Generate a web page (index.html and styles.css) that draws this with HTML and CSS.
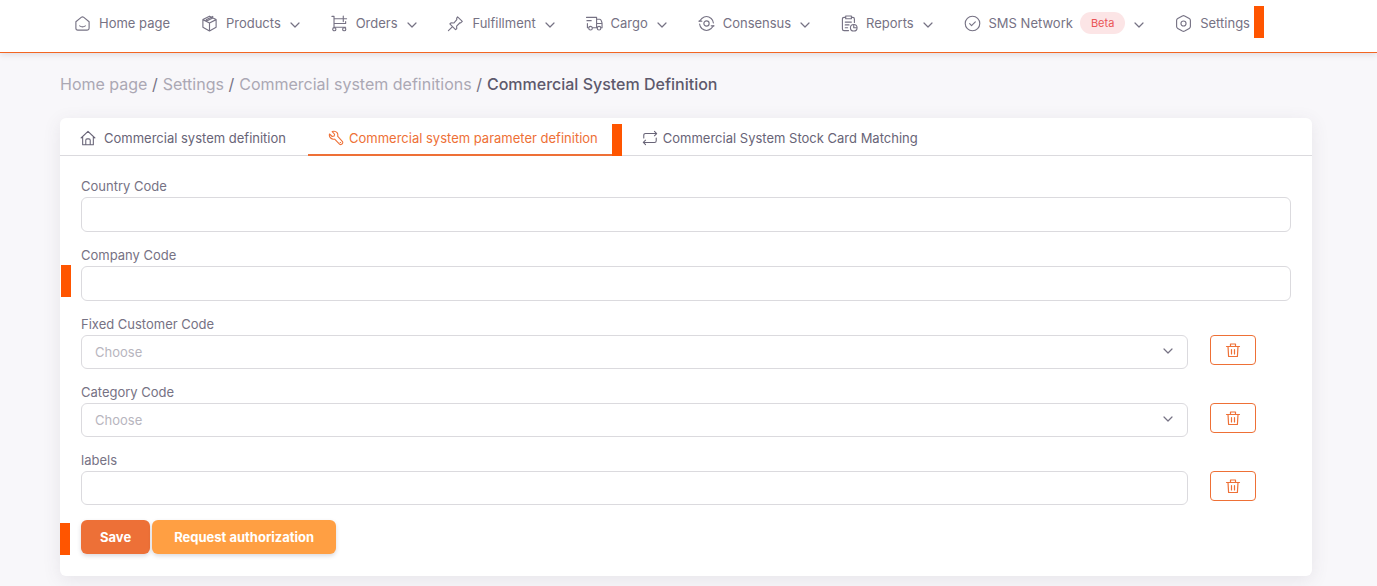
FILE: index.html
```html
<!DOCTYPE html>
<html lang="en">
<head>
<meta charset="utf-8">
<title>Commercial System Definition</title>
<link rel="stylesheet" href="styles.css">
</head>
<body>
<svg class="sprite" aria-hidden="true">
  <symbol id="chevron" viewBox="0 0 10 10"><path d="M1 3l4 4 4-4"/></symbol>
  <symbol id="trash" viewBox="0 0 16 16"><path d="M1.500 4.500h13M5.500 4.500v-2.500h5v2.500M3 4.500l.6 10h8.800l.6-10M6.500 7.500v4.500M9.500 7.500v4.500"/></symbol>
</svg>
<header class="topbar">
  <nav class="nav">
    <a class="nav-item" href="#"><svg class="icon" viewBox="0 0 18 18"><path d="M2 7.200 7.600 2.500q1.400-1 2.800 0L16 7.200V14q0 2-2 2H4q-2 0-2-2zM6 11.500q3 2 6 0"/></svg>Home page</a>
    <a class="nav-item" href="#"><svg class="icon" viewBox="0 0 18 18"><path d="M9 1.200l7 3.600v8.200L9 16.900 2 13V4.800zM2 4.900l7 3.600 7-3.600M9 8.500v8.200M5.500 6.700V5l7-3.500M5.500 6.700l7-3.500"/></svg>Products<svg class="chevron"><use href="#chevron"/></svg></a>
    <a class="nav-item" href="#"><svg class="icon" viewBox="0 0 18 18"><path d="M1 1.500h2.200v12M3.200 4h6.300M3.200 9h12.300V7M3.200 13h12.300M13 1v6M10 4h6.500"/><circle cx="3.500" cy="15" r="1.700"/><circle cx="14" cy="15" r="1.700"/></svg>Orders<svg class="chevron"><use href="#chevron"/></svg></a>
    <a class="nav-item" href="#"><svg class="icon" viewBox="0 0 18 18"><path d="M11.200 2l5 4.800-1.700 1.600-.8-.2-3.500 3.500.1 2.800-1.300 1L3 9.500l1.200-1.100 3 .1 3.200-3.600-.2-1.300zM5.900 12.300 1.500 16.500"/></svg>Fulfillment<svg class="chevron"><use href="#chevron"/></svg></a>
    <a class="nav-item" href="#"><svg class="icon" viewBox="0 0 18 18"><path d="M.5 2.500h10.700v11H7M1 6h4.500M1.500 9v4.500h1M11.200 4.500h3.300q1.500 0 2.500 4v5h-1M11.200 9H17M11.200 13.500h.5"/><circle cx="4.800" cy="14" r="1.900"/><circle cx="13.800" cy="14" r="1.900"/></svg>Cargo<svg class="chevron"><use href="#chevron"/></svg></a>
    <a class="nav-item" href="#"><svg class="icon" viewBox="0 0 18 18"><path d="M4 3.700q5-4.200 10 0 2 1.900 2.300 4.800M1.700 9.500Q2 12.300 4 14.300q5 4.200 10 0M1.700 6.500 4 3.700M14 14.300l2.300-2.800"/><circle cx="9" cy="9" r="2.800"/><path d="M1 6.500h3M14 11.500h3"/></svg>Consensus<svg class="chevron"><use href="#chevron"/></svg></a>
    <a class="nav-item" href="#"><svg class="icon" viewBox="0 0 18 18"><path d="M5 2.500H3.200Q1.500 2.500 1.500 4.200v10.600q0 1.700 1.700 1.700H8M11 2.500h1.500q1.700 0 1.700 1.700V8M5 1h6v3H5zM4.500 7.500H11M4.500 10.500h4M4.500 13.500H7"/><circle cx="13.500" cy="13.500" r="3.500"/><path d="M13.500 10.500v3h3"/></svg>Reports<svg class="chevron"><use href="#chevron"/></svg></a>
    <a class="nav-item" href="#"><svg class="icon" viewBox="0 0 18 18"><circle cx="9" cy="9" r="7.700"/><path d="M6 9.200l2 2 4-4"/></svg>SMS Network<span class="badge">Beta</span><svg class="chevron"><use href="#chevron"/></svg></a>
    <a class="nav-item" href="#"><svg class="icon" viewBox="0 0 18 18"><path d="M7.800 1q1.200-.6 2.400 0l4.900 2.800q1.200.7 1.200 2v6.400q0 1.300-1.200 2L10.200 17q-1.200.6-2.400 0l-4.900-2.800q-1.200-.7-1.200-2V5.800q0-1.300 1.200-2z"/><circle cx="9" cy="9" r="2.700"/></svg>Settings<i class="marker marker-nav"></i></a>
  </nav>
</header>
<main class="page">
  <nav class="crumbs" aria-label="Breadcrumb">
    <span><a href="#">Home page</a> /</span>
    <span><a href="#">Settings</a> /</span>
    <span><a href="#">Commercial system definitions</a> /</span>
    <span class="current">Commercial System Definition</span>
  </nav>
  <section class="card">
    <div class="tabs" role="tablist">
      <button class="tab tab-home" role="tab" type="button"><svg class="icon" viewBox="0 0 18 18"><path d="M1.200 9 9 1.500 16.800 9M3 7.500v9h12v-9M6.500 16.500v-5q0-1.500 1.500-1.500h2q1.500 0 1.500 1.500v5"/></svg>Commercial system definition</button>
      <button class="tab active" role="tab" type="button" aria-selected="true"><svg class="icon" viewBox="0 0 18 18"><path d="M1.700 4.500l3 2.800 2.200-.5.500-2-2.700-3Q8 .6 10.200 3q1.400 1.900.6 4l5.500 6q.8 1.300-.3 2.700-1.300 1.200-2.800.4L7.500 10.300Q5 11 3 9 .9 7 1.700 4.500zM13.700 14h.5"/></svg>Commercial system parameter definition<i class="marker marker-tab"></i></button>
      <button class="tab" role="tab" type="button"><svg class="icon" viewBox="0 0 18 18"><path d="M2 9V6q0-2 2-2h12.500M14 1.500 16.500 4 14 6.500M16 9v3q0 2-2 2H1.500M4 11.500 1.500 14 4 16.500"/></svg>Commercial System Stock Card Matching</button>
    </div>
    <form class="form">
      <div class="field"><label for="country">Country Code</label><input class="control" id="country" type="text"></div>
      <div class="field"><label for="company">Company Code</label><input class="control" id="company" type="text"><i class="marker marker-company"></i></div>
      <div class="field removable"><label for="customer">Fixed Customer Code</label>
        <div class="select"><select class="control" id="customer"><option>Choose</option></select><svg class="chevron"><use href="#chevron"/></svg></div>
        <button class="remove" type="button" aria-label="Delete Fixed Customer Code"><svg class="trash"><use href="#trash"/></svg></button></div>
      <div class="field removable"><label for="category">Category Code</label>
        <div class="select"><select class="control" id="category"><option>Choose</option></select><svg class="chevron"><use href="#chevron"/></svg></div>
        <button class="remove" type="button" aria-label="Delete Category Code"><svg class="trash"><use href="#trash"/></svg></button></div>
      <div class="field removable"><label for="labels">labels</label>
        <input class="control" id="labels" type="text">
        <button class="remove" type="button" aria-label="Delete labels"><svg class="trash"><use href="#trash"/></svg></button></div>
      <div class="actions"><button class="btn save" type="button">Save</button><button class="btn request" type="button">Request authorization</button><i class="marker marker-save"></i></div>
    </form>
  </section>
</main>
</body>
</html>
```

FILE: styles.css
```css
* { box-sizing: border-box; }
body {
  margin: 0;
  min-height: 100vh;
  background: #f8f7fa;
  color: #767284;
  font: 13px/20px Inter, "Liberation Sans", sans-serif;
}
button, input, select { font: inherit; color: inherit; }
svg { fill: none; stroke: currentColor; stroke-width: 1.2; stroke-linecap: round; stroke-linejoin: round; flex: none; }
.sprite { position: absolute; width: 0; height: 0; }
.icon { width: 17px; height: 17px; }
.chevron { width: 10px; height: 10px; }

.topbar {
  height: 53px;
  background: #fff;
  border-bottom: 1px solid #f26522;
  box-shadow: 0 2px 6px rgba(75, 70, 92, .14);
}
.nav { display: flex; justify-content: space-between; padding: 10px 127px 0 74px; }
.nav-item {
  position: relative;
  display: flex;
  align-items: center;
  height: 26px;
  color: inherit;
  text-decoration: none;
  white-space: nowrap;
}
.nav-item .icon { margin-right: 8px; }
.nav-item .chevron { margin: 3px 0 0 9px; }
.badge {
  margin-left: 7px;
  padding: 1px 11px;
  border-radius: 11px;
  background: #fce5e6;
  color: #ea5455;
  font-size: 11px;
}

.page { padding: 19px 65px 10px 60px; }
.crumbs { display: flex; gap: 5px; font-size: 16px; line-height: 24px; white-space: nowrap; }
.crumbs a { color: #aba8b4; text-decoration: none; }
.crumbs .current { color: #5d596c; font-weight: 500; }

.card {
  margin-top: 22px;
  background: #fff;
  border-radius: 6px;
  box-shadow: 0 4px 18px rgba(75, 70, 92, .1);
}
.tabs { display: flex; height: 38px; border-bottom: 1px solid #dbdade; }
.tab {
  position: relative;
  display: flex;
  align-items: center;
  gap: 5px;
  height: 38px;
  padding: 4px 22px 0 20px;
  border: 0;
  border-bottom: 2px solid transparent;
  background: none;
  color: #686477;
  white-space: nowrap;
}
.tab .icon { width: 16px; height: 16px; }
.tab-home { gap: 8px; }
.tab.active { padding-right: 24px; border-color: #ee7036; color: #ee7036; }

.form { display: grid; gap: 13px; padding: 20px 21px 22px; }
.field { position: relative; }
.field label { display: block; height: 21px; line-height: 20px; }
.control {
  display: block;
  width: 100%;
  height: 35px;
  padding: 0 13px;
  border: 1px solid #dbdade;
  border-radius: 6px;
  background: #fff;
}
.removable { display: grid; grid-template-columns: 1fr 81px; column-gap: 22px; }
.removable label { grid-column: 1 / -1; }
.removable .control { height: 34px; }
.select { position: relative; }
.select select { appearance: none; color: #b7b5be; }
.select .chevron { position: absolute; top: 11px; right: 15px; pointer-events: none; }
.remove {
  display: grid;
  place-items: center;
  width: 46px;
  height: 30px;
  padding: 0;
  border: 1px solid #ee7036;
  border-radius: 4px;
  background: #fff;
  color: #ee7036;
}
.trash { width: 16px; height: 16px; }
.actions { position: relative; display: flex; gap: 2px; margin-top: 2px; }
.btn {
  height: 34px;
  padding: 0 19px;
  border: 0;
  border-radius: 6px;
  color: #fff;
  font-weight: 700;
  box-shadow: 0 2px 4px rgba(75, 70, 92, .2);
}
.save { background: #ed7037; }
.request { padding: 0 22px; background: #ff9f43; }

.marker { position: absolute; width: 10px; height: 32px; background: #ff5500; }
.marker-nav { top: -4px; right: -14px; }
.marker-tab { top: 6px; right: 0; }
.marker-company { top: 20px; left: -20px; }
.marker-save { top: 3px; left: -21px; }
```
